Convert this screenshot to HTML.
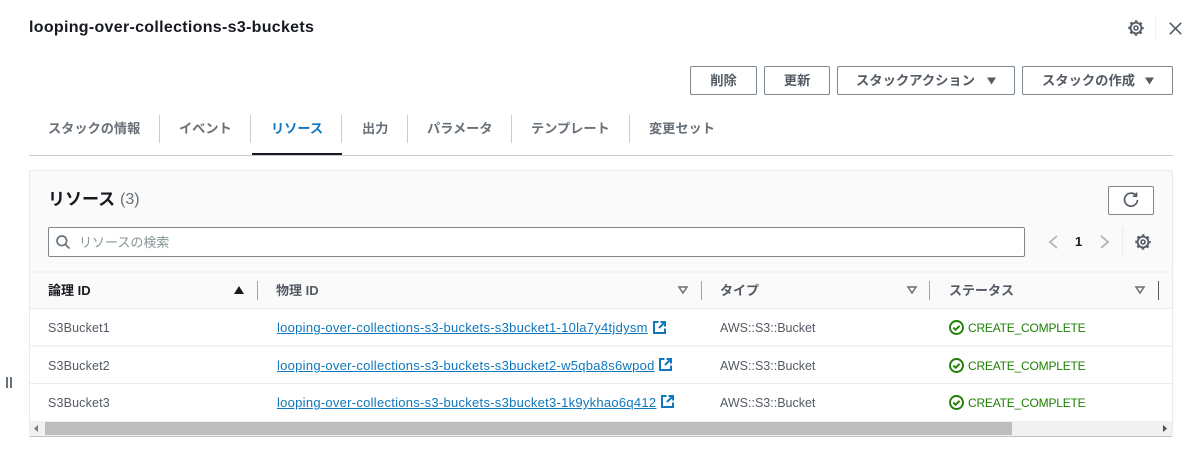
<!DOCTYPE html>
<html lang="ja"><head><meta charset="utf-8"><style>
*{box-sizing:border-box}
html,body{margin:0;padding:0;width:1200px;height:475px;overflow:hidden;background:#fff}
body{font-family:"Liberation Sans","Noto Sans CJK JP",sans-serif;font-size:13px;color:#545b64;position:relative}
.a,.t,.b{position:absolute}
.t{white-space:nowrap;line-height:18px}
.b{border:1px solid #7f878f;border-radius:2px;background:#fff;height:29px;line-height:27px;text-align:center;font-weight:700;color:#545b64;top:66px;font-size:13.3px;white-space:nowrap}
.sep{position:absolute;width:1px;background:#c6ced4}
.tab{top:120px;color:#687078;font-weight:700;font-size:13.2px}
.th{top:282px;font-weight:700;color:#545b64;font-size:13px}
.cell{font-size:12.5px;color:#545b64;letter-spacing:.15px}
.aws{letter-spacing:0}
.lnk{color:#0f77bd;text-decoration:underline;font-size:13px;letter-spacing:.27px;left:277px}
.ok{color:#1d8102;left:968px;letter-spacing:-.2px;font-size:12px}
svg{position:absolute;overflow:visible}
</style></head><body>
<div class="t" style="left:29px;top:18px;font-size:16px;line-height:20px;font-weight:700;color:#16191f;letter-spacing:.3px">looping-over-collections-s3-buckets</div>

<svg style="left:1128px;top:20px" width="16" height="16" viewBox="0 0 16 16" fill="none" stroke="#545b64"><circle cx="8" cy="8" r="5.400" stroke-width="1.800"/><circle cx="8" cy="8" r="6.900" stroke-width="1.600" stroke-dasharray="2.600 2.820" stroke-dashoffset="1.300"/><circle cx="8" cy="8" r="2" stroke-width="1.600"/></svg>
<div class="sep" style="left:1155px;top:17px;height:22px;background:#f0f1f2"></div>
<svg style="left:1169px;top:22px" width="13" height="13" viewBox="0 0 13 13" stroke="#545b64" stroke-width="1.600" fill="none"><path d="M.8.800l11.400 11.400M12.200.800.800 12.200"/></svg>

<div class="b" style="left:690px;width:67px">削除</div>
<div class="b" style="left:764px;width:66px">更新</div>
<div class="b" style="left:837px;width:178px;text-align:left;padding-left:18px">スタックアクション</div>
<svg style="left:986px;top:77px" width="11" height="8"><path d="M1 .5h9L5.500 7.500z" fill="#545b64"/></svg>
<div class="b" style="left:1022px;width:151px;text-align:left;padding-left:19px">スタックの作成</div>
<svg style="left:1144px;top:77px" width="11" height="8"><path d="M1 .5h9L5.500 7.500z" fill="#545b64"/></svg>

<div class="t tab" style="left:48px">スタックの情報</div>
<div class="t tab" style="left:179px">イベント</div>
<div class="t tab" style="left:271px;color:#0f77bd">リソース</div>
<div class="t tab" style="left:362px">出力</div>
<div class="t tab" style="left:427px">パラメータ</div>
<div class="t tab" style="left:531px">テンプレート</div>
<div class="t tab" style="left:649px">変更セット</div>
<div class="sep" style="left:159px;top:115px;height:28px"></div>
<div class="sep" style="left:250px;top:115px;height:28px"></div>
<div class="sep" style="left:341px;top:115px;height:28px"></div>
<div class="sep" style="left:407px;top:115px;height:28px"></div>
<div class="sep" style="left:511px;top:115px;height:28px"></div>
<div class="sep" style="left:629px;top:115px;height:28px"></div>
<div class="a" style="left:29px;top:155px;width:1144px;height:1px;background:#c6cbd1"></div>
<div class="a" style="left:252px;top:153px;width:90px;height:2px;background:#16191f"></div>

<div class="a" style="left:29px;top:170px;width:1144px;height:267px;background:#fafafa;border:1px solid #e9ebed;border-bottom:1px solid #bcc2c8;border-radius:2px"></div>
<div class="t" style="left:48px;top:189px;font-size:17px;line-height:22px;font-weight:700;color:#16191f">リソース</div>
<div class="t" style="left:120px;top:190px;font-size:16px;line-height:20px;color:#687078">(3)</div>
<div class="b" style="left:1108px;top:186px;width:46px;height:29px"></div>
<svg style="left:1123px;top:192px" width="16" height="16" viewBox="0 0 16 16" fill="none" stroke="#545b64" stroke-width="1.700"><path d="M13 3.500A6.500 6.500 0 1 0 14.500 8"/><path d="M13.500 .5v3.700H9.800"/></svg>

<div class="a" style="left:48px;top:227px;width:977px;height:30px;background:#fff;border:1px solid #7f878f;border-radius:2px"></div>
<svg style="left:56px;top:235px" width="14" height="14" viewBox="0 0 14 14" fill="none" stroke="#687078" stroke-width="1.700"><circle cx="5.800" cy="5.800" r="4.800"/><path d="M9.300 9.300 13.500 13.500"/></svg>
<div class="t" style="left:79px;top:234px;color:#879596;font-size:13px">リソースの検索</div>

<svg style="left:1048px;top:235px" width="10" height="14" fill="none" stroke="#aab7b8" stroke-width="1.800"><path d="M9 1 2 7l7 6"/></svg>
<div class="t" style="left:1075px;top:233px;font-weight:700;color:#16191f;font-size:13px">1</div>
<svg style="left:1100px;top:235px" width="10" height="14" fill="none" stroke="#aab7b8" stroke-width="1.800"><path d="m1 1 7 6-7 6"/></svg>
<div class="sep" style="left:1122px;top:227px;height:30px;background:#e9ebed"></div>
<svg style="left:1135px;top:234px" width="16" height="16" viewBox="0 0 16 16" fill="none" stroke="#545b64"><circle cx="8" cy="8" r="5.400" stroke-width="1.800"/><circle cx="8" cy="8" r="6.900" stroke-width="1.600" stroke-dasharray="2.600 2.820" stroke-dashoffset="1.300"/><circle cx="8" cy="8" r="2" stroke-width="1.600"/></svg>

<div class="a" style="left:30px;top:271px;width:1142px;height:2px;background:#f2f3f3"></div>
<div class="a" style="left:30px;top:309px;width:1142px;height:113px;background:#fff"></div>
<div class="a" style="left:30px;top:308px;width:1142px;height:1px;background:#e9ebed"></div>
<div class="a" style="left:30px;top:345px;width:1142px;height:2px;background:#f2f3f3"></div>
<div class="a" style="left:30px;top:383px;width:1142px;height:1px;background:#eaeded"></div>

<div class="t th" style="left:48px;color:#16191f">論理 ID</div>
<svg style="left:234px;top:286px" width="10" height="8"><path d="M0 8 5 0l5 8z" fill="#16191f"/></svg>
<div class="sep" style="left:257px;top:281px;height:19px;background:#9ba7b2"></div>
<div class="t th" style="left:276px">物理 ID</div>
<svg style="left:678px;top:286px" width="10" height="8" fill="none" stroke="#687078" stroke-width="1.500"><path d="M1 1h8L5 7z"/></svg>
<div class="sep" style="left:701px;top:281px;height:19px;background:#9ba7b2"></div>
<div class="t th" style="left:720px">タイプ</div>
<svg style="left:907px;top:286px" width="10" height="8" fill="none" stroke="#687078" stroke-width="1.500"><path d="M1 1h8L5 7z"/></svg>
<div class="sep" style="left:929px;top:281px;height:19px;background:#9ba7b2"></div>
<div class="t th" style="left:949px">ステータス</div>
<svg style="left:1135px;top:286px" width="10" height="8" fill="none" stroke="#687078" stroke-width="1.500"><path d="M1 1h8L5 7z"/></svg>
<div class="sep" style="left:1158px;top:281px;height:19px;background:#545b64"></div>

<div class="t cell" style="left:48px;top:319px">S3Bucket1</div>
<div class="t lnk" style="top:319px">looping-over-collections-s3-buckets-s3bucket1-10la7y4tjdysm</div>
<svg style="left:653px;top:321px" width="13" height="13" viewBox="0 0 13 13" fill="none" stroke="#0f77bd" stroke-width="2"><path d="M5.500 1H1v11h11V7.500M7.500 1H12v4.500M12 1 6 7"/></svg>
<div class="t cell aws" style="left:720px;top:319px">AWS::S3::Bucket</div>
<svg style="left:949px;top:320px" width="15" height="15" viewBox="0 0 15 15" fill="none" stroke="#1d8102" stroke-width="1.900"><circle cx="7.500" cy="7.500" r="6.500"/><path d="m4.300 7.500 2.300 2.300 4-4"/></svg>
<div class="t ok" style="top:319px">CREATE_COMPLETE</div>

<div class="t cell" style="left:48px;top:357px">S3Bucket2</div>
<div class="t lnk" style="top:357px">looping-over-collections-s3-buckets-s3bucket2-w5qba8s6wpod</div>
<svg style="left:659px;top:358px" width="13" height="13" viewBox="0 0 13 13" fill="none" stroke="#0f77bd" stroke-width="2"><path d="M5.500 1H1v11h11V7.500M7.500 1H12v4.500M12 1 6 7"/></svg>
<div class="t cell aws" style="left:720px;top:357px">AWS::S3::Bucket</div>
<svg style="left:949px;top:358px" width="15" height="15" viewBox="0 0 15 15" fill="none" stroke="#1d8102" stroke-width="1.900"><circle cx="7.500" cy="7.500" r="6.500"/><path d="m4.300 7.500 2.300 2.300 4-4"/></svg>
<div class="t ok" style="top:357px">CREATE_COMPLETE</div>

<div class="t cell" style="left:48px;top:394px">S3Bucket3</div>
<div class="t lnk" style="top:394px">looping-over-collections-s3-buckets-s3bucket3-1k9ykhao6q412</div>
<svg style="left:661px;top:395px" width="13" height="13" viewBox="0 0 13 13" fill="none" stroke="#0f77bd" stroke-width="2"><path d="M5.500 1H1v11h11V7.500M7.500 1H12v4.500M12 1 6 7"/></svg>
<div class="t cell aws" style="left:720px;top:394px">AWS::S3::Bucket</div>
<svg style="left:949px;top:395px" width="15" height="15" viewBox="0 0 15 15" fill="none" stroke="#1d8102" stroke-width="1.900"><circle cx="7.500" cy="7.500" r="6.500"/><path d="m4.300 7.500 2.300 2.300 4-4"/></svg>
<div class="t ok" style="top:394px">CREATE_COMPLETE</div>

<div class="a" style="left:30px;top:421px;width:1142px;height:15px;background:#f1f1f1"></div>
<div class="a" style="left:45px;top:422px;width:967px;height:13px;background:#bdbdbd"></div>
<svg style="left:34px;top:425px" width="5" height="7"><path d="M4 0v7L0 3.500z" fill="#7a7a7a"/></svg>
<svg style="left:1163px;top:425px" width="5" height="7"><path d="M0 0v7l4-3.500z" fill="#505050"/></svg>

<div class="a" style="left:6px;top:377px;width:2px;height:11px;background:#687078"></div>
<div class="a" style="left:10px;top:377px;width:2px;height:11px;background:#687078"></div>
</body></html>
